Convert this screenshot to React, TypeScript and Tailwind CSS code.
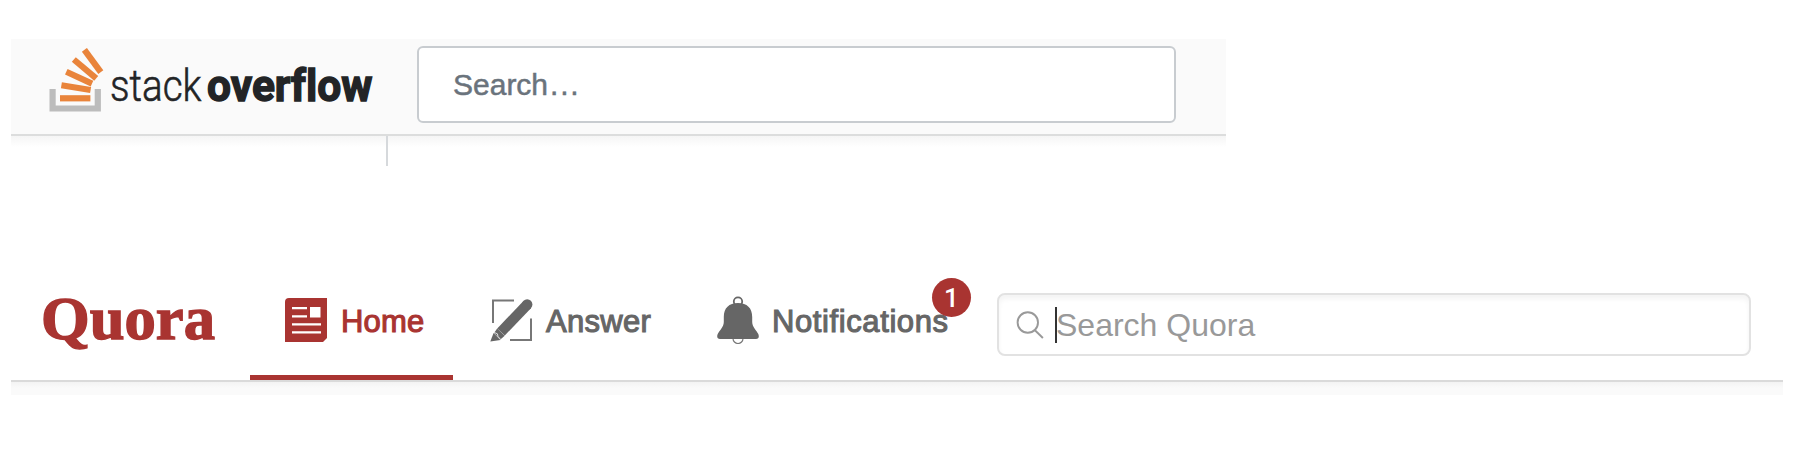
function StackIcon() {
  return (
    <svg className="block h-[66px] w-[55px] shrink-0" viewBox="0 0 55 66" fill="none">
      <path d="M3.6 41V60.5H48.8V41" stroke="#bcbcbc" strokeWidth="6.2" />
      <g stroke="#e9843b" strokeWidth="6.2">
        <path d="M11 50.3H41.4" />
        <path d="M12.4 37.2L41.6 42" />
        <path d="M17.3 23.8L43 35.6" />
        <path d="M24.8 11.5L47.2 30.3" />
        <path d="M35.4 1.8L51.8 24.2" />
      </g>
    </svg>
  );
}

function StackWordmark() {
  return (
    <svg className="block h-12 w-[266px] shrink-0 overflow-visible" viewBox="0 0 266 48" fill="#222426">
      <text transform="scale(0.88 1)" x="0" y="41" textLength="104" lengthAdjust="spacingAndGlyphs" className="font-['Roboto',sans-serif] text-[45px] font-light [font-variant-ligatures:none]" stroke="#222426" strokeWidth="0.6">stack</text>
      <text transform="translate(97 0) scale(0.88 1)" x="0" y="41" textLength="188" lengthAdjust="spacingAndGlyphs" className="font-['Roboto',sans-serif] text-[45px] font-bold [font-variant-ligatures:none]" stroke="#222426" strokeWidth="1.4">overflow</text>
    </svg>
  );
}

function HomeIcon() {
  return (
    <svg className="block h-11 w-[42px]" viewBox="0 0 42 44">
      <path d="M4 0H42V40L38 44H0V4A4 4 0 0 1 4 0Z" fill="#a93431" />
      <path d="M7 10.2H22M7 18.3H22M7 26.3H36M7 34.3H36" stroke="#fff" strokeWidth="2.2" />
      <path d="M25 9H35.5V19.5H25Z" fill="#fff" />
    </svg>
  );
}

function AnswerIcon() {
  return (
    <svg className="block h-11 w-[43px]" viewBox="0 0 43 44" fill="none">
      <path d="M24 2.5H3V25M20 42H41V20.5" stroke="#777" strokeWidth="2" />
      <path d="M11 34L37.2 6.6" stroke="#666" strokeWidth="10.4" />
      <circle cx="37.2" cy="6.5" r="5.2" fill="#666" />
      <path d="M3.6 35L10.5 42L.3 43.6Z" fill="#666" />
      <path d="M7.2 30.4L14.7 37.8L10.4 41.5L4 35Z" fill="#666" />
      <path d="M4.2 34.4L7.4 35.8L8 38.4L10.4 41.2" stroke="#fff" strokeWidth=".8" />
    </svg>
  );
}

function BellIcon() {
  return (
    <svg className="block h-12 w-[42px]" viewBox="0 0 42 48" fill="none">
      <circle cx="21" cy="5.5" r="4.2" stroke="#666" strokeWidth="1.8" />
      <path d="M16 42.5A5 5 0 0 0 26 42.5" stroke="#777" strokeWidth="1.2" />
      <path d="M21 7C12 7 6.8 12 6.8 21V26C6.8 31 2.5 34.5.7 38C-.5 41 .5 43 3 43H39C41.5 43 42.5 41 41.3 38C39.5 34.5 35.2 31 35.2 26V21C35.2 12 30 7 21 7Z" fill="#666" />
    </svg>
  );
}

function SearchIcon() {
  return (
    <svg className="block h-7 w-7 shrink-0" viewBox="0 0 28 28" fill="none" stroke="#999" strokeWidth="1.9">
      <circle cx="11.8" cy="11.5" r="10.2" />
      <path d="M18.7 19L26.9 27" />
    </svg>
  );
}

const label = "whitespace-nowrap text-[31px] leading-9 [-webkit-text-stroke:1.1px_currentColor]";

export default function App() {
  return (
    <div className="flex h-[462px] w-[1806px] flex-col overflow-hidden bg-white pl-[11px] pt-[39px] font-['Liberation_Sans',Arial,sans-serif]">
      <header className="flex h-[97px] w-[1215px] shrink-0 items-start border-b-2 border-[#dcdddd] bg-[#fafafa]">
        <a className="flex pl-[38px] pt-[9px]">
          <StackIcon />
          <span className="pl-[6px] pt-[12px]">
            <StackWordmark />
          </span>
        </a>
        <div className="ml-[41px] mt-[7px] flex h-[77px] w-[759px] items-center rounded-[6px] border-2 border-[#c8ccd0] bg-white pl-[34px] text-[30px] text-[#6a737c] [-webkit-text-stroke:0.5px_currentColor]">
          <span>Search</span>
          <span className="pl-[2px] tracking-[1.8px]">...</span>
        </div>
      </header>
      <div className="flex h-[30px] w-[1215px] shrink-0 bg-[linear-gradient(#f5f5f5,#fff_11px)] pl-[375px]">
        <div className="w-[2px] bg-[#d6d9dc]" />
      </div>

      <nav className="mt-[104px] flex h-[110px] w-[1772px] shrink-0 items-start">
        <a className="block pl-[31px] pt-[21px] text-[#a93431]">
          <svg className="block h-[60px] w-[208px] overflow-visible" viewBox="0 0 208 60" fill="#a93431" stroke="#a93431" strokeWidth="1.4">
            <text x="-1" y="48" textLength="174" lengthAdjust="spacingAndGlyphs" className="font-['Liberation_Serif',serif] text-[62px] font-bold">Quora</text>
          </svg>
        </a>
        <a className="flex h-[110px] w-[203px] border-b-[5px] border-[#a93431] pl-[35px] pt-[28px] text-[#a93431]">
          <HomeIcon />
          <span className={`pl-[14px] pt-[6px] tracking-[0.2px] ${label}`}>Home</span>
        </a>
        <a className="flex pl-[37px] pt-[28px] text-[#666]">
          <AnswerIcon />
          <span className={`w-[184px] pl-[13px] pt-[6px] tracking-[0.3px] ${label}`}>Answer</span>
        </a>
        <a className="relative flex w-[270px] pt-[26px] text-[#666]">
          <BellIcon />
          <span className={`pl-[13px] pt-[8px] tracking-[0.6px] ${label}`}>Notifications</span>
          <span className="absolute left-[215px] top-[8px] flex h-[39px] w-[39px] items-center justify-center rounded-full bg-[#a93431] font-['Roboto',sans-serif] text-[26px] font-medium leading-none text-white">1</span>
        </a>
        <div className="ml-[10px] mt-[23px] flex h-[63px] w-[754px] shrink-0 items-center rounded-[8px] border-2 border-[#e2e2e2] bg-white pl-[17px] text-[32px] text-[#999] shadow-[inset_0_4px_5px_#f4f4f4]">
          <SearchIcon />
          <span className="-mr-px ml-[11px] h-9 w-[2px] bg-[#333]" />
          <span className="whitespace-nowrap">Search Quora</span>
        </div>
      </nav>
      <div className="h-[15px] w-[1772px] shrink-0 border-t-2 border-[#dadada] bg-[linear-gradient(#f3f3f3,#fafafa_6px)]" />
    </div>
  );
}
